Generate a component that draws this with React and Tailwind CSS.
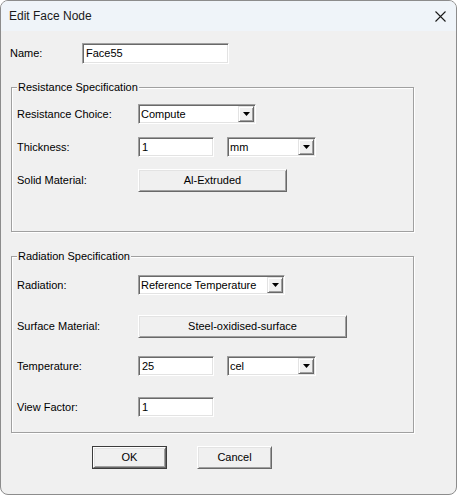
import React from 'react';

const font = { fontFamily: '"Liberation Sans", Arial, sans-serif' };

// sunken text field, like the classic win32 edit control
const Field = ({ className, children }) => (
  <div
    className={`flex items-center bg-white border border-t-[#a0a0a0] border-l-[#a0a0a0] border-r-white border-b-white shadow-[inset_1px_1px_0_#696969,inset_-1px_-1px_0_#e3e3e3] pl-[3px] text-[11px] text-black ${className}`}
  >
    {children}
  </div>
);

const Combo = ({ className, children }) => (
  <div
    className={`flex items-center justify-between bg-white border border-t-[#a0a0a0] border-l-[#a0a0a0] border-r-white border-b-white shadow-[inset_1px_1px_0_#696969,inset_-1px_-1px_0_#e3e3e3] pl-[2px] pr-[1px] text-[11px] text-black ${className}`}
  >
    <span>{children}</span>
    <div className="flex items-center justify-center w-[16px] h-[16px] bg-[#f0f0f0] border border-t-[#e3e3e3] border-l-[#e3e3e3] border-r-[#696969] border-b-[#696969] shadow-[inset_1px_1px_0_white,inset_-1px_-1px_0_#a0a0a0]">
      <svg width="7" height="4" viewBox="0 0 7 4">
        <polygon points="0,0 7,0 3.5,4" fill="#000" />
      </svg>
    </div>
  </div>
);

const Btn = ({ className, children }) => (
  <div
    className={`flex items-center justify-center bg-[#f0f0f0] border border-t-white border-l-white border-r-[#696969] border-b-[#696969] shadow-[inset_1px_1px_0_#e3e3e3,inset_-1px_-1px_0_#a0a0a0] text-[11px] text-black ${className}`}
  >
    {children}
  </div>
);

const Group = ({ title, className, children }) => (
  <div className={`relative ml-[1px] w-[403px] border border-[#a0a0a0] shadow-[inset_1px_1px_0_white,1px_1px_0_white] ${className}`}>
    <span className="absolute left-[5px] top-[-8px] bg-[#f0f0f0] px-[1px] text-[11px] leading-[14px] text-black">
      {title}
    </span>
    {children}
  </div>
);

const Row = ({ label, className, children }) => (
  <div className={`flex items-center gap-[13px] ${className}`}>
    <span className="w-[113px] pl-[5px] text-[11px] text-black whitespace-nowrap">{label}</span>
    {children}
  </div>
);

export default function App() {
  return (
    <div style={font} className="w-[457px] h-[495px] overflow-hidden rounded-[8px] border border-[#8c8c8c] bg-[#f0f0f0]">
      {/* title bar */}
      <div className="flex items-center justify-between h-[30px] bg-[#eff4f9] pl-[8px] pr-[10px]">
        <span className="text-[12px] text-[#1a1a1a]">Edit Face Node</span>
        <svg width="11" height="11" viewBox="0 0 11 11">
          <path d="M0.5 0.5 L10.5 10.5 M10.5 0.5 L0.5 10.5" stroke="#1a1a1a" strokeWidth="1.1" />
        </svg>
      </div>

      <div className="pl-[9px]">
        {/* name */}
        <div className="flex items-center mt-[12px]">
          <span className="w-[72px] text-[11px] text-black">Name:</span>
          <Field className="w-[147px] h-[21px]">Face55</Field>
        </div>

        <Group title="Resistance Specification" className="mt-[23px] h-[145px]">
          <Row label="Resistance Choice:" className="mt-[16px]">
            <Combo className="w-[118px] h-[20px]">Compute</Combo>
          </Row>
          <Row label="Thickness:" className="mt-[13px]">
            <Field className="w-[76px] h-[20px]">1</Field>
            <Combo className="w-[89px] h-[20px]">mm</Combo>
          </Row>
          <Row label="Solid Material:" className="mt-[12px]">
            <Btn className="w-[149px] h-[23px]">Al-Extruded</Btn>
          </Row>
        </Group>

        <Group title="Radiation Specification" className="mt-[24px] h-[177px]">
          <Row label="Radiation:" className="mt-[18px]">
            <Combo className="w-[147px] h-[20px]">Reference Temperature</Combo>
          </Row>
          <Row label="Surface Material:" className="mt-[20px]">
            <Btn className="w-[209px] h-[23px]">Steel-oxidised-surface</Btn>
          </Row>
          <Row label="Temperature:" className="mt-[18px]">
            <Field className="w-[76px] h-[20px]">25</Field>
            <Combo className="w-[89px] h-[20px]">cel</Combo>
          </Row>
          <Row label="View Factor:" className="mt-[21px]">
            <Field className="w-[76px] h-[20px]">1</Field>
          </Row>
        </Group>

        {/* dialog buttons */}
        <div className="flex gap-[30px] mt-[13px] ml-[82px]">
          <div className="border border-[#3c3c3c]">
            <Btn className="w-[73px] h-[21px]">OK</Btn>
          </div>
          <Btn className="w-[75px] h-[23px]">Cancel</Btn>
        </div>
      </div>
    </div>
  );
}
